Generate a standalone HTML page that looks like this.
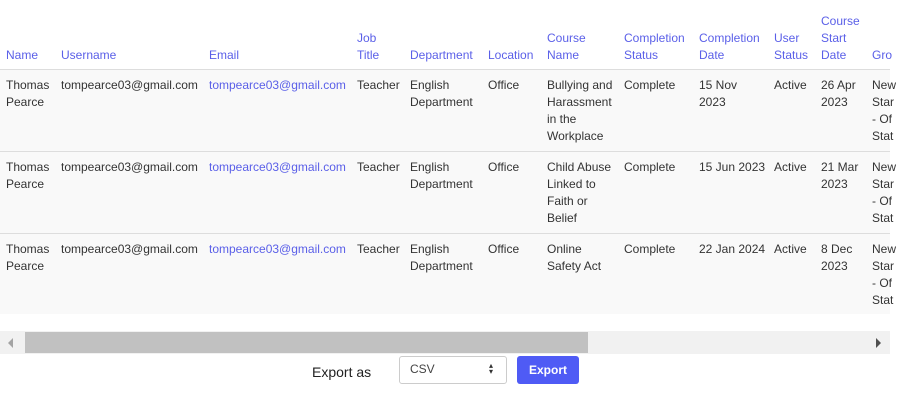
<!DOCTYPE html><html><head><style>
body{margin:0;width:902px;height:419px;background:#fff;font-family:"Liberation Sans",sans-serif;font-size:12px;color:#333;position:relative;overflow:hidden}
.c{position:absolute;line-height:17px;white-space:nowrap}
.t{margin-top:2px}
.h{color:#5a5fe8}
.r{position:absolute;left:0;width:890px;background:#f9f9f9;border-top:1px solid #ddd}
</style></head><body>
<div class="r" style="top:69px;height:81px"></div>
<div class="r" style="top:151px;height:81px"></div>
<div class="r" style="top:233px;height:80px"></div>
<div class="c t h" style="left:6px;top:45px">Name</div>
<div class="c t h" style="left:61px;top:45px">Username</div>
<div class="c t h" style="left:209px;top:45px">Email</div>
<div class="c t h" style="left:357px;top:28px">Job<br>Title</div>
<div class="c t h" style="left:410px;top:45px">Department</div>
<div class="c t h" style="left:488px;top:45px">Location</div>
<div class="c t h" style="left:547px;top:28px">Course<br>Name</div>
<div class="c t h" style="left:624px;top:28px">Completion<br>Status</div>
<div class="c t h" style="left:699px;top:28px">Completion<br>Date</div>
<div class="c t h" style="left:774px;top:28px">User<br>Status</div>
<div class="c t h" style="left:821px;top:11px">Course<br>Start<br>Date</div>
<div class="c t h" style="left:872px;top:45px">Gro</div>

<div class="c t" style="left:6px;top:75px">Thomas<br>Pearce</div>
<div class="c t" style="left:61px;top:75px">tompearce03@gmail.com</div>
<div class="c t h" style="left:209px;top:75px">tompearce03@gmail.com</div>
<div class="c t" style="left:357px;top:75px">Teacher</div>
<div class="c t" style="left:410px;top:75px">English<br>Department</div>
<div class="c t" style="left:488px;top:75px">Office</div>
<div class="c t" style="left:547px;top:75px">Bullying and<br>Harassment<br>in the<br>Workplace</div>
<div class="c t" style="left:624px;top:75px">Complete</div>
<div class="c t" style="left:699px;top:75px">15 Nov<br>2023</div>
<div class="c t" style="left:774px;top:75px">Active</div>
<div class="c t" style="left:821px;top:75px">26 Apr<br>2023</div>
<div class="c t" style="left:872px;top:75px">New<br>Star<br>- Of<br>Stat</div>

<div class="c t" style="left:6px;top:157px">Thomas<br>Pearce</div>
<div class="c t" style="left:61px;top:157px">tompearce03@gmail.com</div>
<div class="c t h" style="left:209px;top:157px">tompearce03@gmail.com</div>
<div class="c t" style="left:357px;top:157px">Teacher</div>
<div class="c t" style="left:410px;top:157px">English<br>Department</div>
<div class="c t" style="left:488px;top:157px">Office</div>
<div class="c t" style="left:547px;top:157px">Child Abuse<br>Linked to<br>Faith or<br>Belief</div>
<div class="c t" style="left:624px;top:157px">Complete</div>
<div class="c t" style="left:699px;top:157px">15 Jun 2023</div>
<div class="c t" style="left:774px;top:157px">Active</div>
<div class="c t" style="left:821px;top:157px">21 Mar<br>2023</div>
<div class="c t" style="left:872px;top:157px">New<br>Star<br>- Of<br>Stat</div>

<div class="c t" style="left:6px;top:239px">Thomas<br>Pearce</div>
<div class="c t" style="left:61px;top:239px">tompearce03@gmail.com</div>
<div class="c t h" style="left:209px;top:239px">tompearce03@gmail.com</div>
<div class="c t" style="left:357px;top:239px">Teacher</div>
<div class="c t" style="left:410px;top:239px">English<br>Department</div>
<div class="c t" style="left:488px;top:239px">Office</div>
<div class="c t" style="left:547px;top:239px">Online<br>Safety Act</div>
<div class="c t" style="left:624px;top:239px">Complete</div>
<div class="c t" style="left:699px;top:239px">22 Jan 2024</div>
<div class="c t" style="left:774px;top:239px">Active</div>
<div class="c t" style="left:821px;top:239px">8 Dec<br>2023</div>
<div class="c t" style="left:872px;top:239px">New<br>Star<br>- Of<br>Stat</div>

<div style="position:absolute;left:0;top:331px;width:890px;height:23px;background:#f1f1f1"></div>
<div style="position:absolute;left:25px;top:332px;width:563px;height:21px;background:#c1c1c1"></div>
<div style="position:absolute;left:8px;top:338px;width:0;height:0;border-top:5px solid transparent;border-bottom:5px solid transparent;border-right:5px solid #a3a3a3"></div>
<div style="position:absolute;left:876px;top:338px;width:0;height:0;border-top:5px solid transparent;border-bottom:5px solid transparent;border-left:5px solid #505050"></div>

<div class="c" style="left:312px;top:364px;font-size:14px;color:#222">Export as</div>
<div style="position:absolute;left:399px;top:356px;width:106px;height:26px;border:1px solid #ccc;border-radius:3px;background:#fff"></div>
<div class="c" style="left:410px;top:361px;color:#444">CSV</div>
<div class="c" style="left:489px;top:363px;font-size:8px;line-height:6px">▴<br>▾</div>
<div style="position:absolute;left:517px;top:356px;width:62px;height:28px;background:#4f5bf5;border-radius:3px;color:#fff;font-weight:bold;text-align:center;line-height:28px">Export</div>
</body></html>
